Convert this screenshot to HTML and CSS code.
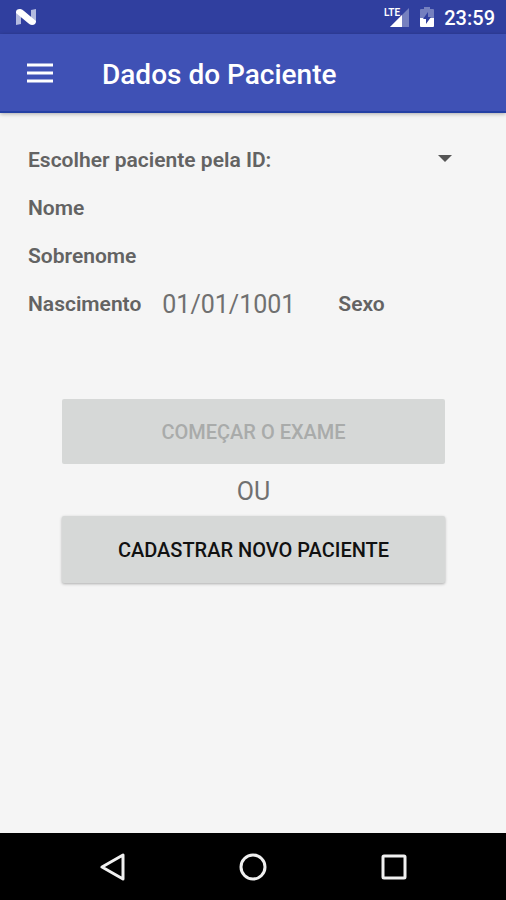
FILE: index.html
```html
<!DOCTYPE html>
<html lang="pt-BR">
<head>
  <meta charset="UTF-8">
  <meta name="viewport" content="width=device-width, initial-scale=1.0">
  <title>Dados do Paciente</title>
  <link rel="stylesheet" href="styles.css">
</head>
<body>
  <div class="status-bar">
    <svg class="logo" width="20" height="18" viewBox="0 0 20 18">
      <path d="M0 4l5-3v15l-5 1zM15 2l5-1v13l-5 2z" fill="#b3badf"/>
      <path d="M0 4q0-3 4-3 2 0 4 2l12 10q0 4-4 4-2 0-4-2L0 5z" fill="#fff"/>
    </svg>
    <div class="status-icons">
      <svg width="26" height="22" viewBox="0 0 26 22">
        <path d="M25 2v19H6z" fill="#7580bf"/>
        <path d="M18 9v12H6z" fill="#fff"/>
        <path d="M0 0h16v11H0z" fill="#303f9f"/>
        <text class="lte" x="0" y="10">LTE</text>
      </svg>
      <svg class="battery" width="14" height="20" viewBox="0 0 14 20">
        <path d="M4 0h6v2h3q1 0 1 1v9H0V3q0-1 1-1h3z" fill="#7580bf"/>
        <path d="M0 11h14v8q0 1-1 1H1q-1 0-1-1z" fill="#fff"/>
        <path d="M8 5v5h3l-5 7v-5H3z" fill="#303f9f"/>
      </svg>
      <span class="clock">23:59</span>
    </div>
  </div>

  <header class="app-bar">
    <button class="menu-btn" type="button" aria-label="Menu">
      <svg width="28" height="20" viewBox="0 0 28 20">
        <path d="M1 2h26M1 10h26M1 18h26" stroke="#fff" stroke-width="3"/>
      </svg>
    </button>
    <h1>Dados do Paciente</h1>
  </header>

  <main>
    <div class="row">
      <label for="paciente">Escolher paciente pela ID:</label>
      <div class="spinner">
        <select id="paciente"></select>
        <svg class="arrow" width="14" height="7" viewBox="0 0 14 7">
          <path d="M0 0h14L7 7z" fill="#555"/>
        </svg>
      </div>
    </div>
    <div class="row"><span class="label">Nome</span></div>
    <div class="row"><span class="label">Sobrenome</span></div>
    <div class="row birth">
      <span class="label">Nascimento</span>
      <span class="value">01/01/1001</span>
      <span class="label gender">Sexo</span>
    </div>

    <div class="actions">
      <button class="btn" type="button" disabled>COMEÇAR O EXAME</button>
      <p class="value">OU</p>
      <button class="btn" type="button">CADASTRAR NOVO PACIENTE</button>
    </div>
  </main>

  <nav class="nav-bar">
    <button type="button" aria-label="Voltar">
      <svg width="28" height="28" viewBox="0 0 28 28">
        <path d="M25 2v24L4 14z"/>
      </svg>
    </button>
    <button type="button" aria-label="Início">
      <svg width="28" height="28" viewBox="0 0 28 28">
        <circle cx="14" cy="14" r="12"/>
      </svg>
    </button>
    <button type="button" aria-label="Recentes">
      <svg width="28" height="28" viewBox="0 0 28 28">
        <rect x="3" y="3" width="22" height="22" rx="1"/>
      </svg>
    </button>
  </nav>
</body>
</html>
```

FILE: styles.css
```css
* {
  margin: 0;
  padding: 0;
  box-sizing: border-box;
}

body {
  font-family: Roboto, sans-serif;
  min-height: 100vh;
  display: flex;
  flex-direction: column;
  background: #f5f5f5;
  color: #636363;
}

svg {
  display: block;
}

button {
  font-family: inherit;
  border: none;
  background: none;
  cursor: pointer;
}

.status-bar {
  height: 34px;
  padding: 0 11px 0 16px;
  display: flex;
  align-items: center;
  justify-content: space-between;
  background: #303f9f;
  color: #fff;
}

.status-icons {
  display: flex;
  align-items: center;
  gap: 10px;
}

.lte {
  font-size: 10px;
  font-weight: 600;
  fill: #fff;
}

.clock {
  padding-top: 2px;
  font-size: 20px;
  font-weight: 500;
}

.app-bar {
  height: 79px;
  padding: 0 26px;
  display: flex;
  align-items: center;
  gap: 48px;
  background: #3f51b5;
  color: #fff;
  border-bottom: 2px solid #2440a4;
  box-shadow: 0 1px 4px rgba(0, 0, 0, 0.3);
}

h1 {
  padding-top: 5px;
  font-size: 28px;
  font-weight: 500;
  line-height: 32px;
}

main {
  flex: 1;
  padding: 23px 28px;
}

.row {
  height: 48px;
  display: flex;
  align-items: center;
}

.row label,
.label {
  font-size: 21px;
  font-weight: 600;
}

.spinner {
  flex: 1;
  position: relative;
}

.spinner select {
  width: 100%;
  height: 40px;
  border: none;
  background: transparent;
  appearance: none;
}

/* drawn over the select, which has no arrow of its own */
.arrow {
  position: absolute;
  right: 26px;
  top: 15px;
  pointer-events: none;
}

.value {
  font-size: 25px;
  font-weight: 400;
  color: #707070;
}

.birth .value {
  margin: 0 43px 0 21px;
}

.actions {
  margin: 71px 33px 0 34px;
  display: flex;
  flex-direction: column;
  text-align: center;
}

.actions .value {
  padding-top: 4px;
  line-height: 48px;
}

.btn {
  height: 67px;
  border-radius: 2px;
  background: #d6d8d7;
  color: #111;
  font-size: 20px;
  font-weight: 500;
  box-shadow: 0 1px 3px rgba(0, 0, 0, 0.3);
}

.btn:disabled {
  height: 65px;
  color: #a9abaa;
  box-shadow: none;
  cursor: default;
}

.nav-bar {
  height: 67px;
  padding: 0 42px;
  display: flex;
  align-items: center;
  background: #000;
}

.nav-bar button {
  flex: 1;
  display: flex;
  justify-content: center;
}

.nav-bar svg {
  fill: none;
  stroke: #f0f0f0;
  stroke-width: 3;
  stroke-linejoin: round;
}
```
